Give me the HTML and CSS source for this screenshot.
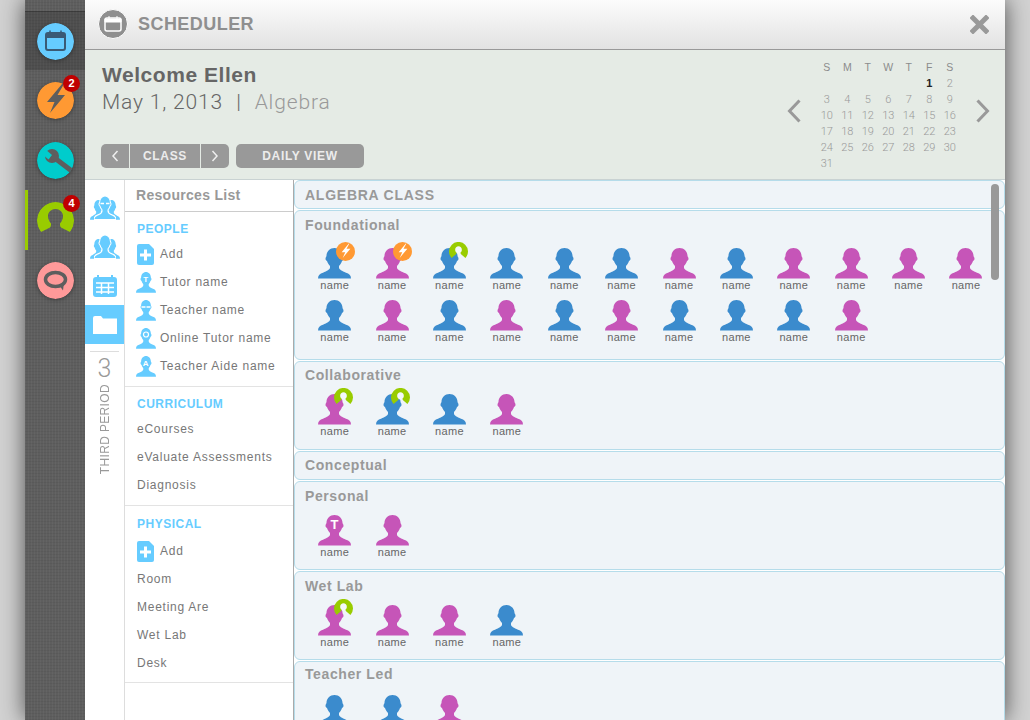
FILE: index.html
```html
<!DOCTYPE html>
<html lang="en">
<head>
  <meta charset="UTF-8">
  <title>Scheduler</title>
  <link rel="stylesheet" href="styles.css">
</head>
<body>
  <svg class="defs" width="0" height="0">
    <symbol id="bust" viewBox="0 0 33 32" preserveAspectRatio="none">
      <path d="M16.5 0C12 0 8.5 3.5 8.5 8C8.5 9 7.5 9.5 7.5 11C7.5 12.5 8.5 13 9 13.5C9.5 15.5 10.5 17 12 18.5V20.5C12 22 9 24 5 25.5C2 26.5 0 28 0 31.5H33C33 28 31 26.5 28 25.5C24 24 21 22 21 20.5V18.5C22.5 17 23.5 15.5 24 13.5C24.5 13 25.5 12.5 25.5 11C25.5 9.5 24.5 9 24.5 8C24.5 3.5 21 0 16.5 0Z"/>
    </symbol>
    <symbol id="ring" viewBox="0 0 37 37">
      <path d="M4 30A18.500 18.500 0 1 1 33 30L24 25.500C23 24.500 23 23 23 21.500C25 19 26 16.500 26 14C26 10 22.500 7 18.500 7C14.500 7 11 10 11 14C11 16.500 12 19 14 21.500C14 23 14 24.500 13 25.500Z"/>
    </symbol>
    <symbol id="ring-mini" viewBox="0 0 37 37">
      <circle cx="18.500" cy="15" r="7.500" fill="#f4f8fa"/>
      <path d="M5 31A18.500 18.500 0 1 1 32 31L23.500 24L22 21C24 20 25 17.500 25 15C25 11.500 22 8.500 18.500 8.500C15 8.500 12 11.500 12 15C12 17.500 13 20 15 21L13.500 24Z"/>
    </symbol>
    <symbol id="bolt" viewBox="0 0 37 37">
      <circle cx="18.5" cy="18.5" r="18.5" fill="#ff9933"/>
      <path d="M25 3L11 20H18L13 31L28 13H20.5L26 3Z" fill="#fff"/>
    </symbol>
    <symbol id="group" viewBox="0 0 30 24">
      <use href="#bust" x="0" y="4" width="17" height="20" fill="#66ccff"/>
      <use href="#bust" x="13" y="4" width="17" height="20" fill="#66ccff"/>
      <use href="#bust" x="4" y="0" width="22" height="24" fill="#66ccff" stroke="#fff" stroke-width="1.500"/>
    </symbol>
    <symbol id="tutor" viewBox="0 0 20 21">
      <use href="#bust" x="0" y="0" width="20" height="21" fill="#66ccff"/>
    </symbol>
    <symbol id="add-doc" viewBox="0 0 17 21">
      <path d="M2 0H12L17 5V19Q17 21 15 21H2Q0 21 0 19V2Q0 0 2 0Z" fill="#66ccff"/>
      <path d="M8.500 5.500v11M3 11h11" stroke="#fff" stroke-width="3"/>
    </symbol>
  </svg>

  <div class="app">
    <nav class="rail">
      <a class="rail-item rail-active">
        <svg class="rail-icon" viewBox="0 0 37 37">
          <circle cx="18.5" cy="18.5" r="18.5" fill="#66ccff"/>
          <rect x="9" y="10" width="19" height="17" rx="2" fill="none" stroke="#3a5a75" stroke-width="2"/>
          <path d="M9 10h19v5H9z" fill="#3a5a75"/>
          <path d="M13 7.500v3M24 7.500v3" stroke="#3a5a75" stroke-width="1.500"/>
        </svg>
      </a>
      <a class="rail-item">
        <svg class="rail-icon" viewBox="0 0 37 37">
          <circle cx="18.5" cy="18.5" r="18.5" fill="#ff9933"/>
          <path d="M25 2L10 20H17.500L13 31L28 13H20.500L27 2Z" fill="#5e5e5e"/>
        </svg>
        <span class="count">2</span>
      </a>
      <a class="rail-item">
        <svg class="rail-icon" viewBox="0 0 37 37">
          <circle cx="18.5" cy="18.5" r="18.5" fill="#00cccc"/>
          <circle cx="15" cy="14" r="7" fill="#5e5e5e"/>
          <path d="M15 14L36 30" stroke="#5e5e5e" stroke-width="5"/>
          <path d="M8 7L15 13L11.500 17.500L5 12Z" fill="#00cccc"/>
        </svg>
      </a>
      <a class="rail-item rail-marked">
        <svg class="rail-icon rail-ring"><use href="#ring"/></svg>
        <span class="count">4</span>
      </a>
      <a class="rail-item">
        <svg class="rail-icon" viewBox="0 0 37 37">
          <circle cx="18.5" cy="18.5" r="18.5" fill="#ff9999"/>
          <ellipse cx="18.500" cy="17.500" rx="10" ry="7" fill="none" stroke="#5e5e5e" stroke-width="3.500"/>
          <path d="M22 23L26 28.500L27 20Z" fill="#5e5e5e"/>
        </svg>
      </a>
    </nav>

    <div class="panel">
      <header class="topbar">
        <span class="topbar-icon">
          <svg width="18" height="16" viewBox="0 0 18 16">
            <rect x="1" y="2" width="16" height="13" rx="2" fill="none" stroke="#fff" stroke-width="1.500"/>
            <path d="M1 3h16v3H1zM5 0v3M13 0v3" fill="#fff" stroke="#fff"/>
          </svg>
        </span>
        <h1>SCHEDULER</h1>
        <svg class="close" width="19" height="19" viewBox="0 0 19 19">
          <path d="M3 3L16 16M16 3L3 16" stroke="#999" stroke-width="5" stroke-linecap="square"/>
        </svg>
      </header>

      <section class="welcome">
        <div class="welcome-text">
          <h2>Welcome Ellen</h2>
          <p>May 1, 2013<i>|</i><span>Algebra</span></p>
          <div class="toolbar">
            <div class="seg">
              <button class="seg-arrow"><svg width="8" height="12" viewBox="0 0 8 12"><path d="M6.500 1L2 6L6.500 11" fill="none" stroke="#eee" stroke-width="1.500"/></svg></button>
              <button class="seg-label">CLASS</button>
              <button class="seg-arrow"><svg width="8" height="12" viewBox="0 0 8 12"><path d="M1.500 1L6 6L1.500 11" fill="none" stroke="#eee" stroke-width="1.500"/></svg></button>
            </div>
            <button class="daily">DAILY VIEW</button>
          </div>
        </div>
        <div class="cal">
          <svg class="cal-arrow" width="14" height="24" viewBox="0 0 14 24"><path d="M12.500 1.500L2.500 12L12.500 22.500" fill="none" stroke="#999" stroke-width="3"/></svg>
          <div class="cal-grid">
            <b>S</b><b>M</b><b>T</b><b>W</b><b>T</b><b>F</b><b>S</b>
            <span></span><span></span><span></span><span></span><span></span><span class="today">1</span><span>2</span>
            <span>3</span><span>4</span><span>5</span><span>6</span><span>7</span><span>8</span><span>9</span>
            <span>10</span><span>11</span><span>12</span><span>13</span><span>14</span><span>15</span><span>16</span>
            <span>17</span><span>18</span><span>19</span><span>20</span><span>21</span><span>22</span><span>23</span>
            <span>24</span><span>25</span><span>26</span><span>27</span><span>28</span><span>29</span><span>30</span>
            <span>31</span>
          </div>
          <svg class="cal-arrow" width="14" height="24" viewBox="0 0 14 24"><path d="M1.500 1.500L11.500 12L1.500 22.500" fill="none" stroke="#999" stroke-width="3"/></svg>
        </div>
      </section>

      <div class="lower">
        <aside class="tabs">
          <a class="tab">
            <svg width="30" height="24" viewBox="0 0 30 24"><use href="#group"/><path d="M10.500 7.500h3.500M16 7.500h3.500" stroke="#fff" stroke-width="1.500"/></svg>
          </a>
          <a class="tab"><svg width="30" height="24"><use href="#group"/></svg></a>
          <a class="tab">
            <svg width="24" height="22" viewBox="0 0 24 22">
              <rect y="2" width="24" height="20" rx="3" fill="#66ccff"/>
              <path d="M5 0v3M19 0v3" stroke="#66ccff" stroke-width="2"/>
              <path d="M3 8h18M3 12.500h18M3 17h18M8.500 8v11M15.500 8v11" stroke="#fff" stroke-width="1.500"/>
            </svg>
          </a>
          <a class="tab tab-active">
            <svg width="24" height="18" viewBox="0 0 24 18"><path d="M0 2Q0 0 2 0H8L10 2.500H24V18H0Z" fill="#fff"/></svg>
          </a>
          <div class="period">
            <span class="period-num">3</span>
            <span class="period-name">THIRD PERIOD</span>
          </div>
        </aside>

        <aside class="resources">
          <div class="res-title">Resources List</div>
          <section class="res-group">
            <h3>PEOPLE</h3>
            <div class="res-row">
              <svg class="res-add"><use href="#add-doc"/></svg>
              <span>Add</span>
            </div>
            <div class="res-row">
              <svg class="res-icon" viewBox="0 0 20 21"><use href="#tutor"/><text x="10" y="9.500" class="res-mark">T</text></svg>
              <span>Tutor name</span>
            </div>
            <div class="res-row">
              <svg class="res-icon" viewBox="0 0 20 21"><use href="#tutor"/><path d="M5.500 7h4M10.500 7h4" stroke="#fff" stroke-width="1.500"/></svg>
              <span>Teacher name</span>
            </div>
            <div class="res-row">
              <svg class="res-icon" viewBox="0 0 20 21"><use href="#tutor"/><circle cx="10" cy="6.500" r="2.500" fill="none" stroke="#fff" stroke-width="1.200"/></svg>
              <span>Online Tutor name</span>
            </div>
            <div class="res-row">
              <svg class="res-icon" viewBox="0 0 20 21"><use href="#tutor"/><text x="10" y="9.500" class="res-mark">A</text></svg>
              <span>Teacher Aide name</span>
            </div>
          </section>
          <section class="res-group">
            <h3>CURRICULUM</h3>
            <div class="res-row">eCourses</div>
            <div class="res-row">eValuate Assessments</div>
            <div class="res-row">Diagnosis</div>
          </section>
          <section class="res-group res-group-last">
            <h3>PHYSICAL</h3>
            <div class="res-row">
              <svg class="res-add"><use href="#add-doc"/></svg>
              <span>Add</span>
            </div>
            <div class="res-row">Room</div>
            <div class="res-row">Meeting Are</div>
            <div class="res-row">Wet Lab</div>
            <div class="res-row">Desk</div>
          </section>
        </aside>

        <main class="board">
          <section class="group group-bar"><h4 class="class-name">ALGEBRA CLASS</h4></section>

          <section class="group group-tall">
            <h4>Foundational</h4>
            <div class="people">
              <div class="person blue"><svg class="bust"><use href="#bust"/></svg><svg class="mini"><use href="#bolt"/></svg>name</div>
              <div class="person pink"><svg class="bust"><use href="#bust"/></svg><svg class="mini"><use href="#bolt"/></svg>name</div>
              <div class="person blue"><svg class="bust"><use href="#bust"/></svg><svg class="mini mini-ring"><use href="#ring-mini"/></svg>name</div>
              <div class="person blue"><svg class="bust"><use href="#bust"/></svg>name</div>
              <div class="person blue"><svg class="bust"><use href="#bust"/></svg>name</div>
              <div class="person blue"><svg class="bust"><use href="#bust"/></svg>name</div>
              <div class="person pink"><svg class="bust"><use href="#bust"/></svg>name</div>
              <div class="person blue"><svg class="bust"><use href="#bust"/></svg>name</div>
              <div class="person pink"><svg class="bust"><use href="#bust"/></svg>name</div>
              <div class="person pink"><svg class="bust"><use href="#bust"/></svg>name</div>
              <div class="person pink"><svg class="bust"><use href="#bust"/></svg>name</div>
              <div class="person pink"><svg class="bust"><use href="#bust"/></svg>name</div>
              <div class="person blue"><svg class="bust"><use href="#bust"/></svg>name</div>
              <div class="person pink"><svg class="bust"><use href="#bust"/></svg>name</div>
              <div class="person blue"><svg class="bust"><use href="#bust"/></svg>name</div>
              <div class="person pink"><svg class="bust"><use href="#bust"/></svg>name</div>
              <div class="person blue"><svg class="bust"><use href="#bust"/></svg>name</div>
              <div class="person pink"><svg class="bust"><use href="#bust"/></svg>name</div>
              <div class="person blue"><svg class="bust"><use href="#bust"/></svg>name</div>
              <div class="person blue"><svg class="bust"><use href="#bust"/></svg>name</div>
              <div class="person blue"><svg class="bust"><use href="#bust"/></svg>name</div>
              <div class="person pink"><svg class="bust"><use href="#bust"/></svg>name</div>
            </div>
          </section>

          <section class="group group-snug">
            <h4>Collaborative</h4>
            <div class="people">
              <div class="person pink"><svg class="bust"><use href="#bust"/></svg><svg class="mini mini-ring"><use href="#ring-mini"/></svg>name</div>
              <div class="person blue"><svg class="bust"><use href="#bust"/></svg><svg class="mini mini-ring"><use href="#ring-mini"/></svg>name</div>
              <div class="person blue"><svg class="bust"><use href="#bust"/></svg>name</div>
              <div class="person pink"><svg class="bust"><use href="#bust"/></svg>name</div>
            </div>
          </section>

          <section class="group group-bar group-snug"><h4>Conceptual</h4></section>

          <section class="group">
            <h4>Personal</h4>
            <div class="people">
              <div class="person pink"><svg class="bust"><use href="#bust"/></svg><span class="initial">T</span>name</div>
              <div class="person pink"><svg class="bust"><use href="#bust"/></svg>name</div>
            </div>
          </section>

          <section class="group">
            <h4>Wet Lab</h4>
            <div class="people">
              <div class="person pink"><svg class="bust"><use href="#bust"/></svg><svg class="mini mini-ring"><use href="#ring-mini"/></svg>name</div>
              <div class="person pink"><svg class="bust"><use href="#bust"/></svg>name</div>
              <div class="person pink"><svg class="bust"><use href="#bust"/></svg>name</div>
              <div class="person blue"><svg class="bust"><use href="#bust"/></svg>name</div>
            </div>
          </section>

          <section class="group group-high">
            <h4>Teacher Led</h4>
            <div class="people">
              <div class="person blue"><svg class="bust"><use href="#bust"/></svg></div>
              <div class="person blue"><svg class="bust"><use href="#bust"/></svg></div>
              <div class="person pink"><svg class="bust"><use href="#bust"/></svg></div>
            </div>
          </section>

          <div class="scrollbar"></div>
        </main>
      </div>
    </div>
  </div>
</body>
</html>
```

FILE: styles.css
```css
* {
  box-sizing: border-box;
}

html, body {
  height: 100%;
}

body {
  margin: 0;
  overflow: hidden;
  font-family: 'Liberation Sans', Arial, sans-serif;
  background: #d2d2d2;
  padding: 0 25px;
}

.defs {
  position: absolute;
}

.app {
  display: flex;
  height: 720px;
  box-shadow: 0 0 22px rgba(0,0,0,0.65);
}

/* left rail */
.rail {
  width: 60px;
  flex: none;
  padding-top: 12px;
  background-color: #5e5e5e;
  background-image:
    repeating-linear-gradient(90deg, rgba(255,255,255,0.035) 0 1px, transparent 1px 3px),
    repeating-linear-gradient(0deg, rgba(0,0,0,0.05) 0 1px, transparent 1px 3px);
}

.rail-item {
  display: flex;
  align-items: center;
  justify-content: center;
  position: relative;
  height: 60px;
}

.rail-active {
  height: 58px;
  background: rgba(0,0,0,0.16);
  box-shadow: 0 -1px 0 rgba(0,0,0,0.35);
}

.rail-marked {
  box-shadow: inset 3px 0 0 #99cc00;
}

.rail-icon {
  width: 37px;
  height: 37px;
  border-radius: 50%;
  filter: drop-shadow(0 1px 2px rgba(0,0,0,0.35));
}

.rail-ring {
  fill: #99cc00;
  filter: none;
}

.count {
  position: absolute;
  top: 5px;
  left: 38px;
  width: 17px;
  height: 17px;
  border-radius: 50%;
  background: #c00000;
  color: #fff;
  font-size: 11px;
  font-weight: bold;
  line-height: 17px;
  text-align: center;
}

/* main panel */
.panel {
  flex: 1;
  min-width: 0;
  display: flex;
  flex-direction: column;
  background: #fff;
}

.topbar {
  height: 50px;
  flex: none;
  display: flex;
  align-items: center;
  padding: 0 16px 1px 13px;
  border-bottom: 1px solid #999;
  background: linear-gradient(to bottom, #fcfcfc, #e2e2e2);
}

.topbar-icon {
  width: 30px;
  height: 30px;
  border-radius: 50%;
  background: #8f8f8f;
  border: 1px solid #fff;
  display: flex;
  align-items: center;
  justify-content: center;
}

.topbar h1 {
  margin: 0 0 0 10px;
  flex: 1;
  font-size: 18px;
  color: #8f8f8f;
  letter-spacing: 0.45px;
}

.welcome {
  height: 130px;
  flex: none;
  display: flex;
  justify-content: space-between;
  padding-left: 16px;
  background: #e5ebe5;
  border-bottom: 1px solid #c9d2d2;
}

.welcome-text {
  display: flex;
  flex-direction: column;
  padding-top: 13px;
}

.welcome h2 {
  margin: 0 0 0 1px;
  font-size: 21px;
  line-height: 24px;
  color: #666;
  letter-spacing: 0.55px;
}

.welcome p {
  margin: 2px 0 0 1px;
  font-family: Roboto, sans-serif;
  font-weight: 300;
  font-size: 21px;
  line-height: 26px;
  color: #666;
  letter-spacing: 0.85px;
}

.welcome p i {
  font-style: normal;
  margin: 0 13px;
}

.welcome p span {
  color: #999;
}

.toolbar {
  display: flex;
  gap: 7px;
  margin-top: 29px;
}

button {
  border: none;
  padding: 0;
  height: 24px;
  background: #999;
  color: #ececec;
  font-family: inherit;
  font-size: 12px;
  font-weight: bold;
  letter-spacing: 0.7px;
}

.seg {
  display: flex;
  gap: 1px;
  border-radius: 5px;
  overflow: hidden;
}

.seg-arrow {
  width: 28px;
  display: flex;
  align-items: center;
  justify-content: center;
}

.seg-label {
  width: 70px;
}

.daily {
  width: 128px;
  border-radius: 5px;
}

.cal {
  display: flex;
  align-items: flex-start;
  gap: 16px;
  padding-right: 15px;
}

.cal-arrow {
  margin-top: 49px;
}

.cal-grid {
  width: 143.5px;
  margin-top: 9px;
  display: grid;
  grid-template-columns: repeat(7, 20.5px);
  grid-auto-rows: 16px;
  text-align: center;
  font-family: Roboto, sans-serif;
  font-weight: 300;
  font-size: 11px;
  line-height: 18px;
  color: #999;
}

.cal-grid b {
  font-family: 'Liberation Sans', sans-serif;
  font-size: 10.5px;
  line-height: 16px;
  color: #8c8c8c;
}

.cal-grid .today {
  font-family: 'Liberation Sans', sans-serif;
  font-weight: bold;
  line-height: 16px;
  color: #222;
}

/* lower area */
.lower {
  flex: 1;
  min-height: 0;
  display: flex;
}

.tabs {
  width: 40px;
  flex: none;
  padding-top: 8px;
  border-right: 1px solid #ddd;
}

.tab {
  height: 39px;
  display: flex;
  align-items: center;
  justify-content: center;
}

.tab-active {
  background: #66ccff;
}

.period {
  display: flex;
  flex-direction: column;
  align-items: center;
  margin: 7px 5px 0;
  border-top: 1px solid #ddd;
  padding-top: 2px;
  color: #999;
}

.period-num {
  font-family: Roboto, sans-serif;
  font-weight: 300;
  font-size: 25px;
  line-height: 30px;
}

.period-name {
  writing-mode: vertical-rl;
  transform: rotate(180deg);
  font-size: 12px;
  letter-spacing: 0.35px;
}

.resources {
  width: 168px;
  flex: none;
}

.res-title {
  height: 32px;
  padding: 7px 0 0 11px;
  font-size: 14px;
  font-weight: bold;
  color: #999;
  letter-spacing: 0.3px;
  border-bottom: 1px solid #ccc;
}

.res-group {
  padding: 10px 0 6px 12px;
  border-bottom: 1px solid #e3e3e3;
}

.res-group-last {
  padding: 11px 0 5px 12px;
}

.res-group h3 {
  margin: 0 0 4px;
  font-size: 12px;
  line-height: 14px;
  color: #66ccff;
  letter-spacing: 0.5px;
}

.res-group-last h3 {
  margin-bottom: 6px;
}

.res-row {
  display: flex;
  align-items: center;
  height: 28px;
  font-size: 12px;
  color: #777;
  letter-spacing: 0.75px;
}

.res-icon {
  flex: none;
  width: 20px;
  height: 21px;
  margin: 0 4px 0 -1px;
}

.res-add {
  flex: none;
  width: 17px;
  height: 21px;
  margin-right: 6px;
}

.res-mark {
  font-family: 'Liberation Sans', sans-serif;
  font-size: 8px;
  font-weight: bold;
  text-anchor: middle;
  fill: #fff;
}

/* board of groups */
.board {
  flex: 1;
  min-width: 0;
  position: relative;
  overflow: hidden;
  border-left: 1px solid #aaa;
  background: #fff;
}

.group {
  height: 89px;
  margin-bottom: 1px;
  padding: 4px 0 0 10px;
  background: #eff4f8;
  border: 1px solid #b5dcea;
  border-radius: 6px;
}

.group-bar {
  height: 29px;
}

.group-tall {
  height: 150px;
}

.group-snug {
  padding-top: 3px;
}

.group-high {
  padding-top: 2px;
}

.group h4 {
  margin: 0;
  font-size: 14px;
  line-height: 20px;
  color: #999;
  letter-spacing: 0.6px;
}

.group .class-name {
  letter-spacing: 0.75px;
}

.people {
  display: grid;
  grid-template-columns: repeat(12, 57.4px);
  grid-auto-rows: 52px;
  margin: 9px 0 0 1px;
}

.group-tall .people {
  margin-top: 13px;
}

.group-high .people {
  margin-top: 11px;
}

.person {
  position: relative;
  display: flex;
  flex-direction: column;
  align-items: center;
  font-size: 11px;
  line-height: 13px;
  color: #666;
  letter-spacing: 0.3px;
}

.bust {
  width: 33px;
  height: 31px;
  flex: none;
}

.blue .bust {
  fill: #3b8bcd;
}

.pink .bust {
  fill: #c655b8;
}

.mini {
  position: absolute;
  top: -6px;
  left: 30px;
  width: 19px;
  height: 19px;
}

.mini-ring {
  left: 28px;
  fill: #99cc00;
}

.initial {
  position: absolute;
  top: 3px;
  left: 0;
  right: 0;
  text-align: center;
  color: #fff;
  font-size: 13px;
  font-weight: bold;
}

.scrollbar {
  position: absolute;
  top: 4px;
  right: 6px;
  width: 8px;
  height: 96px;
  border-radius: 4px;
  background: #999;
}
```
